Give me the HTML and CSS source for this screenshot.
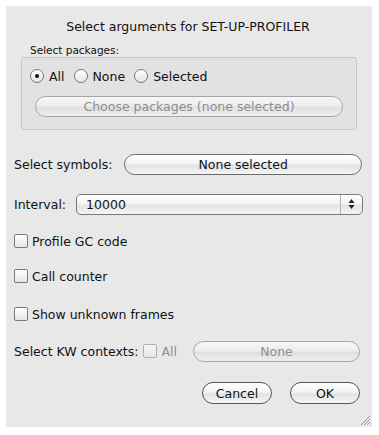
FILE: index.html
```html
<!DOCTYPE html>
<html lang="en">
<head>
  <meta charset="UTF-8" />
  <title>Select arguments for SET-UP-PROFILER</title>
  <link rel="stylesheet" href="styles.css">
</head>
<body>
  <div class="window">
    <h1 class="title">Select arguments for SET-UP-PROFILER</h1>

    <div class="group-label">Select packages:</div>
    <div class="group">
      <div class="radio-row">
        <label class="radio"><span class="radio-box checked"></span>All</label>
        <label class="radio"><span class="radio-box"></span>None</label>
        <label class="radio"><span class="radio-box"></span>Selected</label>
      </div>
      <button class="btn btn-wide" disabled>Choose packages (none selected)</button>
    </div>

    <div class="row row-symbols">
      <span class="label">Select symbols:</span>
      <button class="btn btn-fill">None selected</button>
    </div>

    <div class="row row-interval">
      <span class="label">Interval:</span>
      <div class="combo">
        <span class="combo-value">10000</span>
        <span class="stepper">
          <svg width="7" height="12" viewBox="0 0 7 12">
            <path d="M3.5 1 L6.5 5 L0.5 5 Z" fill="#222"/>
            <path d="M3.5 11 L6.5 7 L0.5 7 Z" fill="#222"/>
          </svg>
        </span>
      </div>
    </div>

    <label class="check check-gc"><span class="check-box"></span>Profile GC code</label>
    <label class="check check-call"><span class="check-box"></span>Call counter</label>
    <label class="check check-frames"><span class="check-box"></span>Show unknown frames</label>

    <div class="row row-kw">
      <span class="label">Select KW contexts:</span>
      <label class="check disabled"><span class="check-box"></span>All</label>
      <button class="btn btn-fill" disabled>None</button>
    </div>

    <div class="actions">
      <button class="btn btn-action">Cancel</button>
      <button class="btn btn-action">OK</button>
    </div>

    <svg class="grip" width="10" height="10" viewBox="0 0 10 10">
      <path d="M1 10 L10 1 M4 10 L10 4 M7 10 L10 7" stroke="#999" stroke-width="1"/>
    </svg>
  </div>
</body>
</html>
```

FILE: styles.css
```css
* {
  box-sizing: border-box;
}

body {
  margin: 0;
  background: #ffffff;
  font-family: "DejaVu Sans", sans-serif;
  font-size: 12.5px;
  color: #111;
}

.window {
  position: relative;
  margin: 6px;
  width: 366px;
  height: 421px;
  padding: 0 10px 0 8px;
  background: #e8e8e8;
  display: flex;
  flex-direction: column;
}

.title {
  margin: 12px 0 0;
  font-size: 12.5px;
  font-weight: normal;
  line-height: 17px;
  text-align: center;
}

.group-label {
  margin: 9px 0 0 16px;
  font-size: 10.5px;
  line-height: 12px;
}

.group {
  margin: 1px 5px 0 7px;
  height: 73px;
  padding: 10px 8px 0 8px;
  border: 1px solid #c6c6c6;
  border-radius: 3px;
  background: #e2e2e2;
}

.radio-row {
  display: flex;
  gap: 9px;
  height: 16px;
  align-items: center;
}

.radio {
  display: flex;
  align-items: center;
  gap: 5px;
}

.radio-box {
  width: 14px;
  height: 14px;
  border-radius: 50%;
  border: 1px solid #777;
  background: linear-gradient(#ffffff, #e4e4e4);
  display: flex;
  align-items: center;
  justify-content: center;
}

.radio-box.checked::after {
  content: "";
  width: 4px;
  height: 4px;
  border-radius: 50%;
  background: #111;
}

.btn {
  font-family: inherit;
  font-size: 12.5px;
  color: #111;
  height: 21px;
  padding: 0;
  border: 1px solid #6c6c6c;
  border-radius: 11px;
  background: linear-gradient(#ffffff 0%, #f4f4f4 45%, #e2e2e2 55%, #f6f6f6 100%);
}

.btn:disabled {
  color: #8d8d8d;
  border-color: #a6a6a6;
  background: linear-gradient(#f6f6f6 0%, #eeeeee 45%, #e0e0e0 55%, #efefef 100%);
}

.btn-wide {
  display: block;
  margin: 12px 0 0 5px;
  width: 308px;
}

.row {
  display: flex;
  align-items: center;
}

.label {
  white-space: nowrap;
}

.btn-fill {
  flex: 1;
}

.row-symbols {
  margin-top: 23px;
  height: 22px;
  gap: 12px;
}

.row-interval {
  margin-top: 18px;
  height: 22px;
  gap: 10px;
}

.combo {
  flex: 1;
  height: 21px;
  margin-right: -1px;
  display: flex;
  align-items: center;
  border: 1px solid #7a7a7a;
  border-radius: 5px;
  background: linear-gradient(#ffffff 0%, #f4f4f4 45%, #e4e4e4 55%, #f4f4f4 100%);
}

.combo-value {
  flex: 1;
  padding-left: 9px;
}

.stepper {
  width: 22px;
  height: 100%;
  border-left: 1px solid #b0b0b0;
  display: flex;
  align-items: center;
  justify-content: center;
}

.check {
  display: flex;
  align-items: center;
  gap: 4px;
  height: 16px;
}

.check-box {
  width: 14px;
  height: 14px;
  border: 1px solid #7a7a7a;
  border-radius: 2px;
  background: linear-gradient(#ffffff, #e6e6e6);
}

.check-gc {
  margin-top: 18px;
}

.check-call {
  margin-top: 19px;
}

.check-frames {
  margin-top: 22px;
}

.check.disabled {
  color: #8d8d8d;
  margin-left: 5px;
}

.check.disabled .check-box {
  border-color: #b0b0b0;
  background: linear-gradient(#f4f4f4, #e8e8e8);
}

.row-kw {
  margin-top: 18px;
  height: 22px;
}

.row-kw .btn-fill {
  margin-left: 16px;
  margin-right: 2px;
}

.actions {
  margin-top: 20px;
  display: flex;
  justify-content: flex-end;
  gap: 18px;
  margin-right: 2px;
}

.btn-action {
  width: 70px;
  height: 22px;
  border-color: #555;
}

.grip {
  position: absolute;
  right: 2px;
  bottom: 2px;
}
```
